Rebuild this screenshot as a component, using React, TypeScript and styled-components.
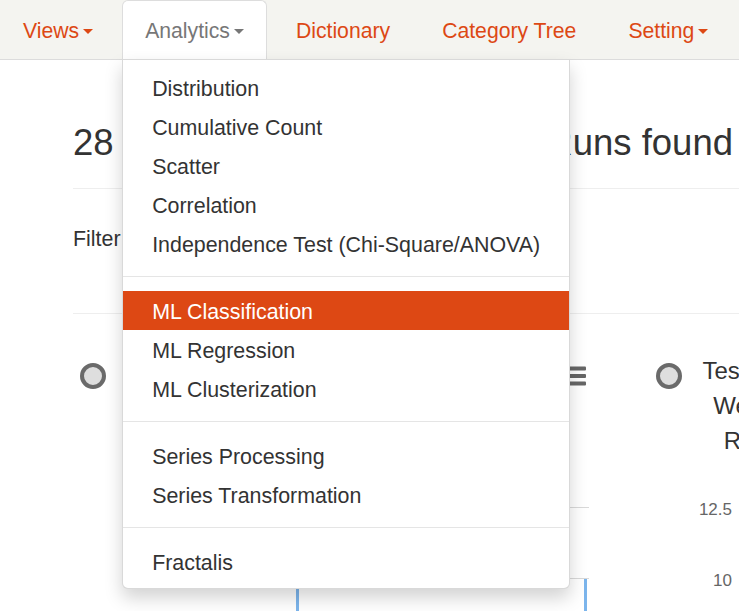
import React from 'react';
import styled, { createGlobalStyle } from 'styled-components';

const GlobalStyle = createGlobalStyle`
  html, body { margin: 0; padding: 0; overflow: hidden; background: #fff; }
  body { font-family: "Liberation Sans", Arial, Helvetica, sans-serif; color: #333; }
  * { box-sizing: border-box; }
`;

const Navbar = styled.nav`
  height: 60px;
  background: #f4f4f0;
  border-bottom: 1px solid #dcdcdc;
  display: flex;
  gap: 6px;
  position: relative;
  z-index: 10;
`;

const NavItem = styled.div<{ $active?: boolean }>`
  position: relative;
  height: 59px;
  display: flex;
  align-items: center;
  padding: 2px 22px 0;
  font-size: 21.2px;
  line-height: 30px;
  white-space: nowrap;
  color: ${(p) => (p.$active ? '#777' : '#dd4814')};
  background: ${(p) => (p.$active ? '#fff' : 'transparent')};
  border: 1px solid ${(p) => (p.$active ? '#ddd' : 'transparent')};
  border-bottom: none;
  border-radius: 6px 6px 0 0;
`;

const Caret = styled.span`
  display: inline-block;
  width: 0;
  height: 0;
  margin-left: 4px;
  border-top: 5px solid currentColor;
  border-left: 5.5px solid transparent;
  border-right: 5.5px solid transparent;
`;

const Menu = styled.ul`
  position: absolute;
  top: 100%;
  left: -1px;
  width: 448px;
  margin: 0;
  padding: 7.5px 0;
  list-style: none;
  background: #fff;
  border: 1px solid rgba(0, 0, 0, 0.15);
  border-radius: 0 0 6px 6px;
  box-shadow: 0 9px 18px rgba(0, 0, 0, 0.175);
  z-index: 20;
`;

const MenuItem = styled.li<{ $active?: boolean }>`
  padding: 6.5px 29px 2.5px;
  font-size: 21.4px;
  line-height: 30px;
  white-space: nowrap;
  color: ${(p) => (p.$active ? '#fff' : '#333')};
  background: ${(p) => (p.$active ? '#dd4814' : 'transparent')};
`;

const Divider = styled.li`
  height: 1px;
  margin: 13.5px 0;
  background: #e5e5e5;
`;

const Main = styled.main`
  padding-left: 73px;
`;

const PageHeader = styled.div`
  padding-top: 62.7px;
  padding-bottom: 25.7px;
  border-bottom: 1px solid #eee;
`;

const Heading = styled.h1`
  margin: 0;
  font-size: 36.5px;
  line-height: 39.6px;
  font-weight: 400;
  color: #333;
  white-space: nowrap;
`;

const FilterBar = styled.div`
  padding: 35px 0 59px;
  font-size: 21.4px;
  line-height: 30px;
  color: #333;
  border-bottom: 1px solid #eee;
`;

const WidgetRow = styled.div`
  display: flex;
  gap: 49px;
  padding-top: 39px;
`;

const Widget = styled.section<{ $width: number }>`
  flex: 0 0 ${(p) => p.$width}px;
  padding: 0 14px 0 7px;
`;

const WidgetHeader = styled.div`
  display: flex;
  align-items: flex-start;
  gap: 12px;
  min-height: 110px;
`;

const Radio = styled.span`
  flex: 0 0 26px;
  width: 26px;
  height: 26px;
  margin-top: 10px;
  border-radius: 50%;
  border: 4.5px solid #6a6a6a;
  background: #dedede;
`;

const WidgetTitle = styled.h2<{ $width?: number }>`
  ${(p) => (p.$width ? `flex: 0 0 ${p.$width}px;` : 'flex: 1 1 auto;')}
  margin: 0;
  font-size: 24px;
  line-height: 35px;
  font-weight: 400;
  text-align: center;
  color: #333;
`;

const TitleLine = styled.span`
  display: block;
  white-space: nowrap;
`;

const MenuIcon = styled.svg`
  flex: 0 0 18px;
  margin-top: 13px;
`;

const Chart = styled.svg`
  display: block;
  overflow: visible;
`;

const Hamburger = () => (
  <MenuIcon width="18" height="20" viewBox="0 0 18 20">
    <rect x="0" y="0.5" width="18" height="4" rx="1" fill="#666" />
    <rect x="0" y="8" width="18" height="4" rx="1" fill="#666" />
    <rect x="0" y="15.5" width="18" height="4" rx="1" fill="#666" />
  </MenuIcon>
);

const menuGroups: { label: string; active?: boolean }[][] = [
  [
    { label: 'Distribution' },
    { label: 'Cumulative Count' },
    { label: 'Scatter' },
    { label: 'Correlation' },
    { label: 'Independence Test (Chi-Square/ANOVA)' },
  ],
  [
    { label: 'ML Classification', active: true },
    { label: 'ML Regression' },
    { label: 'ML Clusterization' },
  ],
  [{ label: 'Series Processing' }, { label: 'Series Transformation' }],
  [{ label: 'Fractalis' }],
];

export default function App() {
  return (
    <>
      <GlobalStyle />
      <Navbar>
        <NavItem>
          Views<Caret />
        </NavItem>
        <NavItem $active>
          Analytics<Caret />
          <Menu>
            {menuGroups.map((group, gi) => (
              <React.Fragment key={gi}>
                {gi > 0 && <Divider />}
                {group.map((item) => (
                  <MenuItem key={item.label} $active={item.active}>
                    {item.label}
                  </MenuItem>
                ))}
              </React.Fragment>
            ))}
          </Menu>
        </NavItem>
        <NavItem>Dictionary</NavItem>
        <NavItem>Category Tree</NavItem>
        <NavItem>
          Setting<Caret />
        </NavItem>
      </Navbar>
      <Main>
        <PageHeader>
          <Heading>28 Items in ML Classification Runs found</Heading>
        </PageHeader>
        <FilterBar>Filter</FilterBar>
        <WidgetRow>
          <Widget $width={527}>
            <WidgetHeader>
              <Radio />
              <WidgetTitle>
                <TitleLine>Accuracy</TitleLine>
              </WidgetTitle>
              <Hamburger />
            </WidgetHeader>
            <Chart width="506" height="160">
              <line x1="70" y1="44.5" x2="509" y2="44.5" stroke="#d9d9d9" strokeWidth="1" />
              <line x1="70" y1="115.5" x2="509" y2="115.5" stroke="#d9d9d9" strokeWidth="1" />
              <rect x="216" y="116" width="3" height="60" fill="#7cb5ec" />
              <rect x="504" y="116" width="3" height="60" fill="#7cb5ec" />
            </Chart>
          </Widget>
          <Widget $width={402}>
            <WidgetHeader>
              <Radio />
              <WidgetTitle $width={313}>
                <TitleLine>Test Accuracies vs. Training</TitleLine>
                <TitleLine>Weighted by Sample Size</TitleLine>
                <TitleLine>Ridge Regression Runs</TitleLine>
              </WidgetTitle>
              <Hamburger />
            </WidgetHeader>
            <Chart width="381" height="160">
              <text x="76" y="52" textAnchor="end" fontSize="17" fill="#666" fontFamily="Liberation Sans, Arial, sans-serif">
                12.5
              </text>
              <text x="76" y="122.7" textAnchor="end" fontSize="17" fill="#666" fontFamily="Liberation Sans, Arial, sans-serif">
                10
              </text>
              <line x1="90" y1="44.5" x2="381" y2="44.5" stroke="#d9d9d9" strokeWidth="1" />
              <line x1="90" y1="115.5" x2="381" y2="115.5" stroke="#d9d9d9" strokeWidth="1" />
            </Chart>
          </Widget>
        </WidgetRow>
      </Main>
    </>
  );
}
